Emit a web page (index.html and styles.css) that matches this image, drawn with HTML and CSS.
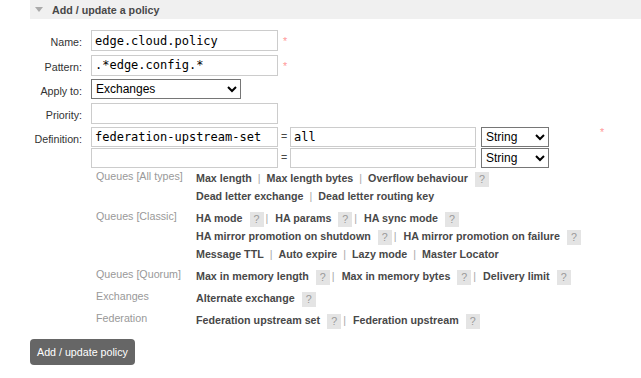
FILE: index.html
```html
<!DOCTYPE html>
<html lang="en">
<head>
    <meta charset="UTF-8">
    <title>Add / update a policy</title>
    <link rel="stylesheet" href="styles.css">
</head>
<body>
    <div class="section">
        <div class="section-head"><span class="arrow"></span>Add / update a policy</div>
        <form class="policy-form">
            <div class="form-grid">
                <label>Name:</label>
                <div class="field"><input type="text" class="text" value="edge.cloud.policy"><span class="req">*</span></div>

                <label>Pattern:</label>
                <div class="field"><input type="text" class="text" value=".*edge.config.*"><span class="req">*</span></div>

                <label>Apply to:</label>
                <div class="field"><select class="apply"><option>Exchanges</option></select></div>

                <label>Priority:</label>
                <div class="field"><input type="text" class="text" value=""></div>

                <label>Definition:</label>
                <div class="definition">
                    <div class="def-row">
                        <input type="text" class="key" value="federation-upstream-set">
                        <span class="eq">=</span>
                        <input type="text" class="value" value="all">
                        <select class="type"><option>String</option></select>
                        <span class="req def-req">*</span>
                    </div>
                    <div class="def-row">
                        <input type="text" class="key" value="">
                        <span class="eq">=</span>
                        <input type="text" class="value" value="">
                        <select class="type"><option>String</option></select>
                    </div>

                    <div class="help-table">
                        <div class="cat">Queues [All types]</div>
                        <div class="links">
                            <div><span class="arg">Max length</span><span class="sep">|</span><span class="arg">Max length bytes</span><span class="sep">|</span><span class="arg">Overflow behaviour</span><span class="help">?</span></div>
                            <div><span class="arg">Dead letter exchange</span><span class="sep">|</span><span class="arg">Dead letter routing key</span></div>
                        </div>

                        <div class="cat">Queues [Classic]</div>
                        <div class="links">
                            <div><span class="arg">HA mode</span><span class="help">?</span><span class="sep">|</span><span class="arg">HA params</span><span class="help">?</span><span class="sep">|</span><span class="arg">HA sync mode</span><span class="help">?</span></div>
                            <div><span class="arg">HA mirror promotion on shutdown</span><span class="help">?</span><span class="sep">|</span><span class="arg">HA mirror promotion on failure</span><span class="help">?</span></div>
                            <div><span class="arg">Message TTL</span><span class="sep">|</span><span class="arg">Auto expire</span><span class="sep">|</span><span class="arg">Lazy mode</span><span class="sep">|</span><span class="arg">Master Locator</span></div>
                        </div>

                        <div class="cat">Queues [Quorum]</div>
                        <div class="links">
                            <div><span class="arg">Max in memory length</span><span class="help">?</span><span class="sep">|</span><span class="arg">Max in memory bytes</span><span class="help">?</span><span class="sep">|</span><span class="arg">Delivery limit</span><span class="help">?</span></div>
                        </div>

                        <div class="cat">Exchanges</div>
                        <div class="links">
                            <div><span class="arg">Alternate exchange</span><span class="help">?</span></div>
                        </div>

                        <div class="cat">Federation</div>
                        <div class="links">
                            <div><span class="arg">Federation upstream set</span><span class="help">?</span><span class="sep">|</span><span class="arg">Federation upstream</span><span class="help">?</span></div>
                        </div>
                    </div>
                </div>
            </div>
            <button type="button" class="submit">Add / update policy</button>
        </form>
    </div>
</body>
</html>
```

FILE: styles.css
```css
body {
    margin: 0;
    font-family: "Liberation Sans", Arial, sans-serif;
    font-size: 10.7px;
    color: #484848;
}
.section {
    margin-left: 30px;
}
.section-head {
    display: flex;
    align-items: center;
    height: 19px;
    padding-left: 5px;
    background-color: #f0f0f0;
    font-weight: bold;
}
.arrow {
    width: 0;
    height: 0;
    border-left: 4.5px solid transparent;
    border-right: 4.5px solid transparent;
    border-top: 5px solid #aaa;
    margin-right: 9px;
}
.policy-form {
    padding-top: 11px;
}
.form-grid {
    display: grid;
    grid-template-columns: 52px 1fr;
    column-gap: 9px;
    row-gap: 3.5px;
}
.form-grid label {
    text-align: right;
    line-height: 16px;
    padding-top: 4px;
    color: #333;
}
.field {
    display: flex;
    align-items: flex-start;
}
input {
    box-sizing: border-box;
    border: 1px solid #ccc;
    padding: 0 3px;
    margin: 0;
    font-family: "DejaVu Sans Mono", monospace;
    font-size: 12px;
    color: #000;
    outline: none;
}
input.text {
    width: 187px;
    height: 21px;
}
select {
    box-sizing: border-box;
    height: 20px;
    margin: 0;
    font-family: "Liberation Sans", Arial, sans-serif;
    font-size: 12px;
    color: #000;
    background-color: #fff;
}
select.apply {
    width: 150px;
}
.req {
    margin-left: 5px;
    padding-top: 3px;
    line-height: 16px;
    color: #f99;
}
.def-row {
    display: flex;
    align-items: flex-start;
    margin-bottom: 1px;
}
.def-row input {
    height: 20px;
}
input.key {
    width: 187px;
}
.eq {
    width: 12px;
    text-align: center;
    line-height: 19px;
}
input.value {
    width: 186px;
}
select.type {
    width: 68px;
    margin-left: 5px;
}
.req.def-req {
    margin-left: 51px;
    padding-top: 0;
    line-height: 11px;
}
.help-table {
    display: grid;
    grid-template-columns: 100px 1fr;
    row-gap: 4px;
    margin-top: 1px;
    margin-left: 5px;
    line-height: 18px;
}
.cat {
    color: #999;
    margin-top: -2px;
}
.links {
    white-space: nowrap;
}
.arg {
    font-weight: bold;
}
.sep {
    margin: 0 6px;
    color: #aaa;
}
.help + .sep {
    margin-left: 2px;
    margin-right: 7px;
}
.help {
    display: inline-block;
    width: 14px;
    height: 15px;
    margin-left: 7px;
    line-height: 15px;
    text-align: center;
    vertical-align: middle;
    background-color: #e4e4e4;
    color: #999;
}
.submit {
    margin-top: 10px;
    height: 26px;
    padding: 0 7px;
    border: none;
    border-radius: 4px;
    background-color: #666;
    color: #fff;
    font-family: "Liberation Sans", Arial, sans-serif;
    font-size: 10.7px;
}
```
